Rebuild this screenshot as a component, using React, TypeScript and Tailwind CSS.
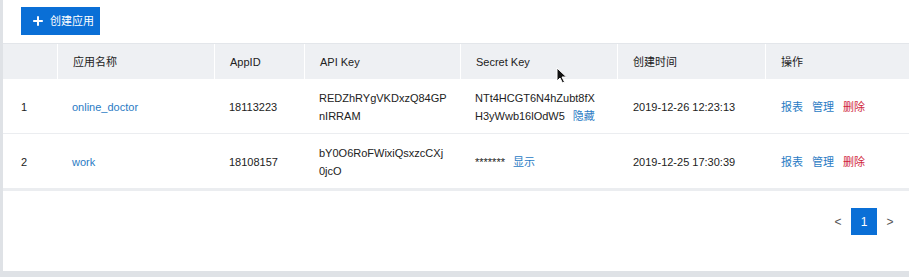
import { Plus } from "lucide-react";

const cols = "grid grid-cols-[54px_157px_90px_156px_157px_148px_144px]";

const rows = [
  {
    no: "1",
    name: "online_doctor",
    appId: "18113223",
    apiKey: ["REDZhRYgVKDxzQ84GP", "nIRRAM"],
    secret: ["NTt4HCGT6N4hZubt8fX", "H3yWwb16lOdW5"],
    toggle: "隐藏",
    time: "2019-12-26 12:23:13",
  },
  {
    no: "2",
    name: "work",
    appId: "18108157",
    apiKey: ["bY0O6RoFWixiQsxzcCXj", "0jcO"],
    secret: ["*******"],
    toggle: "显示",
    time: "2019-12-25 17:30:39",
  },
];

const headers = ["", "应用名称", "AppID", "API Key", "Secret Key", "创建时间", "操作"];

export default function App() {
  return (
    <div
      className="relative w-[909px] h-[277px] bg-[#dfe2e6] pl-[3px] overflow-hidden text-[11px] text-[#222]"
      style={{ fontFamily: '"Liberation Sans", "Noto Sans CJK SC", sans-serif' }}
    >
      <div className="bg-white h-[271px] flex flex-col">
        {/* Toolbar */}
        <div className="h-[43px] pl-[18px] pt-[7px]">
          <button className="h-[28px] w-[79px] bg-[#0a6fd6] text-white flex items-center gap-[5px] pl-[10px] text-[11px]">
            <Plus className="w-[14px] h-[14px]" strokeWidth={3.4} />
            <span>创建应用</span>
          </button>
        </div>

        {/* Header */}
        <div className={`${cols} h-[36px] bg-[#eef0f3] border-t border-[#e3e6ea]`}>
          {headers.map((h, i) => (
            <div
              key={i}
              className={`flex items-center pl-[15px] pt-[1px] text-[#222] ${i > 0 ? "border-l border-white" : ""}`}
            >
              {h}
            </div>
          ))}
        </div>

        {/* Rows */}
        {rows.map((r, idx) => (
          <div
            key={r.no}
            className={`${cols} leading-[18px] pt-[2px] ${idx === rows.length - 1 ? "h-[57px] border-b-[3px] border-[#ebedf0]" : "h-[55px] border-b border-[#ebedf0]"}`}
          >
            <div className="flex items-center pl-[18px]">{r.no}</div>
            <div className="flex items-center pl-[15px] text-[#2a7bc4]">{r.name}</div>
            <div className="flex items-center pl-[15px]">{r.appId}</div>
            <div className="flex flex-col justify-center pl-[15px]">
              {r.apiKey.map((l) => (
                <span key={l}>{l}</span>
              ))}
            </div>
            <div className="flex flex-col justify-center pl-[15px]">
              {r.secret.length > 1 && <span>{r.secret[0]}</span>}
              <span>
                {r.secret[r.secret.length - 1]}
                <span className="ml-[8px] text-[#2a7bc4]">{r.toggle}</span>
              </span>
            </div>
            <div className="flex items-center pl-[16px]">{r.time}</div>
            <div className="flex items-center pl-[16px] gap-[9px]">
              <span className="text-[#2a7bc4]">报表</span>
              <span className="text-[#2a7bc4]">管理</span>
              <span className="text-[#d0263a]">删除</span>
            </div>
          </div>
        ))}

        {/* Pagination */}
        <div className="flex justify-end items-center pt-[17px] pr-[6px]">
          <span className="w-[26px] text-center text-[#555] text-[12px]">&lt;</span>
          <span className="w-[26px] h-[27px] bg-[#0a6fd6] text-white text-[12px] flex items-center justify-center">1</span>
          <span className="w-[26px] text-center text-[#555] text-[12px]">&gt;</span>
        </div>
      </div>

      {/* mouse cursor */}
      <svg className="absolute left-[556px] top-[67px]" width="12" height="17" viewBox="0 0 12 17">
        <path d="M1 1 L1 14 L4 11 L6.5 16 L8.5 15 L6 10 L10.5 10 Z" fill="#111" stroke="#fff" strokeWidth="1" />
      </svg>
    </div>
  );
}
